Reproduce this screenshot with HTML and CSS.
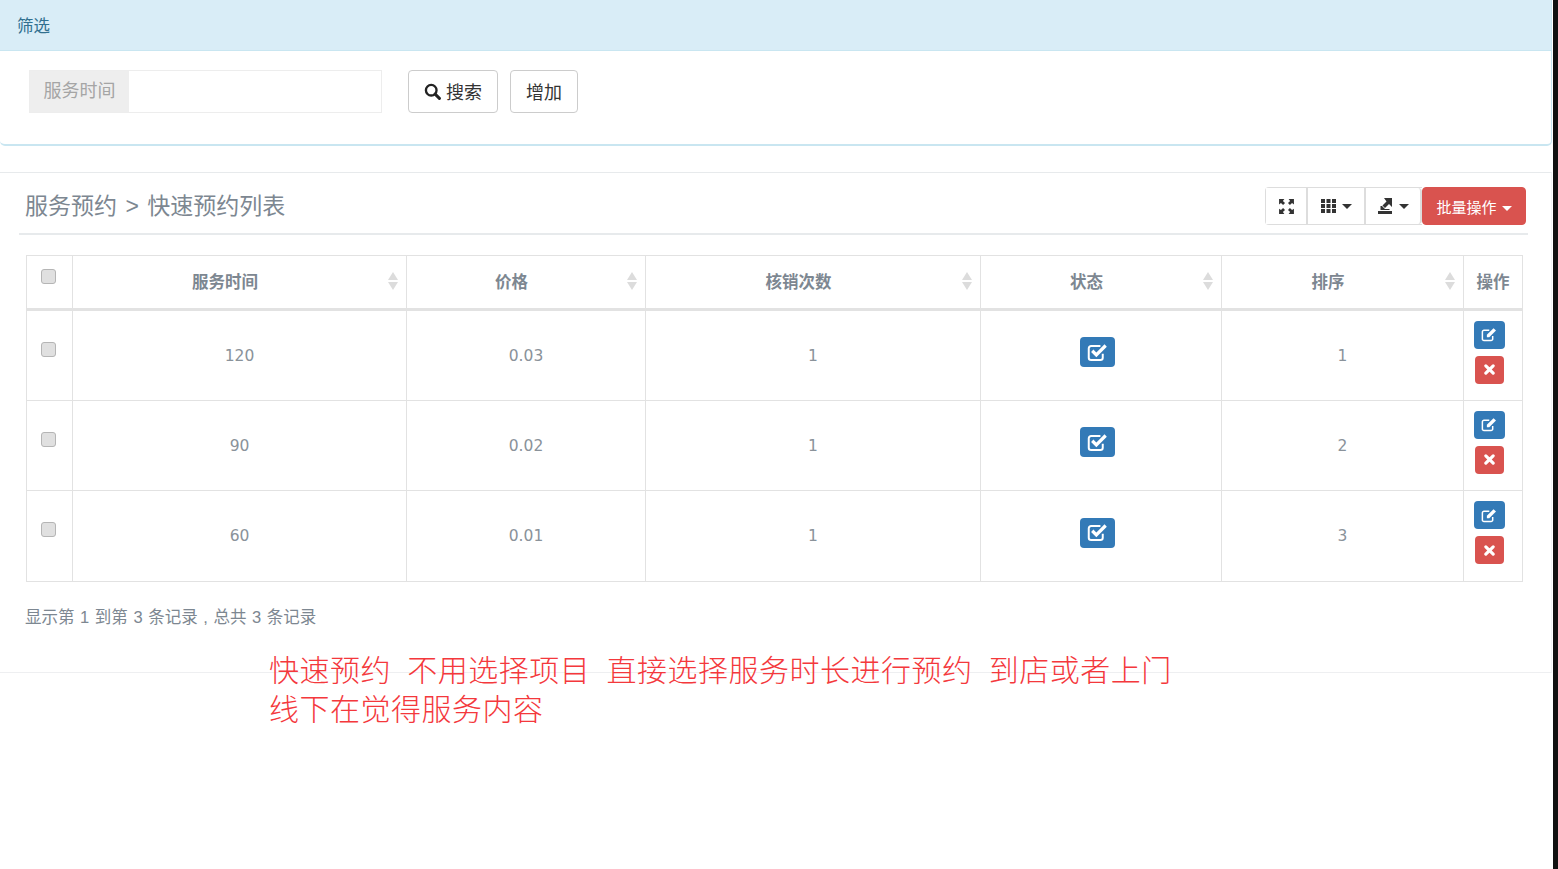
FILE: index.html
```html
<!DOCTYPE html>
<html lang="zh-CN">
<head>
  <meta charset="UTF-8" />
  <title>快速预约列表</title>
  <link rel="stylesheet" href="styles.css">
</head>
<body>
  <div class="page">
    <div class="filter-panel">
      <div class="filter-head">筛选</div>
      <div class="filter-body">
        <div class="input-group">
          <span class="input-label">服务时间</span>
          <input class="input-box" type="text" />
        </div>
        <button class="btn btn-search">
          <svg class="ico-search" viewBox="0 0 16 16"><circle cx="6.8" cy="6.8" r="5" fill="none" stroke="#222" stroke-width="2.2"/><path d="M10.5 10.5L14.5 14.5" stroke="#222" stroke-width="2.8" stroke-linecap="round"/></svg>
          搜索
        </button>
        <button class="btn btn-add">增加</button>
      </div>
    </div>

    <div class="list-box">
      <div class="list-head">
        <h3 class="list-title">服务预约 &gt; 快速预约列表</h3>
        <div class="toolbar">
          <div class="tool-group">
            <button class="tool tool-full">
              <svg width="17" height="17" viewBox="0 0 16 16" fill="#333"><path d="M1 1h5L4.6 2.8 6.6 4.8 4.8 6.6 2.8 4.6 1 6zM15 1v5L13.2 4.6 11.2 6.6 9.4 4.8 11.4 2.8 10 1zM1 15v-5l1.8 1.4 2-2 1.8 1.8-2 2L6 15zM15 15h-5l1.4-1.8-2-2 1.8-1.8 2 2L15 10z"/></svg>
            </button>
            <button class="tool tool-cols">
              <svg width="15" height="14" viewBox="0 0 15 14" fill="#333"><path d="M0 0h4v4H0zM5.500 0h4v4h-4zM11 0h4v4h-4zM0 5h4v4H0zM5.500 5h4v4h-4zM11 5h4v4h-4zM0 10h4v4H0zM5.500 10h4v4h-4zM11 10h4v4h-4z"/></svg>
              <span class="caret"></span>
            </button>
            <button class="tool tool-export">
              <svg width="15" height="16" viewBox="0 0 15 16" fill="#333"><path d="M0 13h14v3H0zM6 0h8v9l-3-3-4 4-2.500-2.500 4-4zM2.500 12V8H4l3 3h4.500v1z"/></svg>
              <span class="caret"></span>
            </button>
          </div>
          <button class="btn-batch">批量操作 <span class="caret caret-white"></span></button>
        </div>
      </div>

      <table class="data-table">
        <colgroup>
          <col class="col-check"><col class="col-time"><col class="col-price"><col class="col-count"><col class="col-state"><col class="col-sort"><col class="col-op">
        </colgroup>
        <thead>
          <tr>
            <th class="cell-check"><input class="check" type="checkbox" /></th>
            <th><div class="th-inner"><span class="th-label">服务时间</span><svg class="sort" viewBox="0 0 10 18"><path d="M5 0l5 8H0zM5 18L0 10h10z"/></svg></div></th>
            <th><div class="th-inner"><span class="th-label">价格</span><svg class="sort" viewBox="0 0 10 18"><path d="M5 0l5 8H0zM5 18L0 10h10z"/></svg></div></th>
            <th><div class="th-inner"><span class="th-label">核销次数</span><svg class="sort" viewBox="0 0 10 18"><path d="M5 0l5 8H0zM5 18L0 10h10z"/></svg></div></th>
            <th><div class="th-inner"><span class="th-label">状态</span><svg class="sort" viewBox="0 0 10 18"><path d="M5 0l5 8H0zM5 18L0 10h10z"/></svg></div></th>
            <th><div class="th-inner"><span class="th-label">排序</span><svg class="sort" viewBox="0 0 10 18"><path d="M5 0l5 8H0zM5 18L0 10h10z"/></svg></div></th>
            <th class="th-op">操作</th>
          </tr>
        </thead>
        <tbody id="rows">
          <tr>
            <td class="cell-check"><input class="check" type="checkbox" /></td>
            <td>120</td><td>0.03</td><td>1</td>
            <td class="cell-state"><button class="state-btn"><svg viewBox="0 0 18 16"><path d="M13.500 9v3.500a2 2 0 0 1-2 2h-8a2 2 0 0 1-2-2v-8a2 2 0 0 1 2-2h8" fill="none" stroke="#fff" stroke-width="1.700"/><path d="M4.500 6.500L8 10l8-8" fill="none" stroke="#fff" stroke-width="2.800"/></svg></button></td>
            <td>1</td>
            <td class="cell-op">
              <button class="op-btn op-edit"><svg viewBox="0 0 16 14"><path d="M11 8.500v2.700a1.500 1.500 0 0 1-1.500 1.500H2.800a1.500 1.500 0 0 1-1.500-1.500V4.500A1.500 1.500 0 0 1 2.800 3h5" fill="none" stroke="#fff" stroke-width="1.400"/><path d="M5.500 9.500V7.200L11.800 1l2.300 2.300-6.300 6.200z" fill="#fff"/></svg></button>
              <button class="op-btn op-del"><svg viewBox="0 0 12 12"><path d="M2 2l8 8M10 2l-8 8" stroke="#fff" stroke-width="3.400" stroke-linecap="round"/></svg></button>
            </td>
          </tr>
          <tr>
            <td class="cell-check"><input class="check" type="checkbox" /></td>
            <td>90</td><td>0.02</td><td>1</td>
            <td class="cell-state"><button class="state-btn"><svg viewBox="0 0 18 16"><path d="M13.500 9v3.500a2 2 0 0 1-2 2h-8a2 2 0 0 1-2-2v-8a2 2 0 0 1 2-2h8" fill="none" stroke="#fff" stroke-width="1.700"/><path d="M4.500 6.500L8 10l8-8" fill="none" stroke="#fff" stroke-width="2.800"/></svg></button></td>
            <td>2</td>
            <td class="cell-op">
              <button class="op-btn op-edit"><svg viewBox="0 0 16 14"><path d="M11 8.500v2.700a1.500 1.500 0 0 1-1.500 1.500H2.800a1.500 1.500 0 0 1-1.500-1.500V4.500A1.500 1.500 0 0 1 2.800 3h5" fill="none" stroke="#fff" stroke-width="1.400"/><path d="M5.500 9.500V7.200L11.800 1l2.300 2.300-6.300 6.200z" fill="#fff"/></svg></button>
              <button class="op-btn op-del"><svg viewBox="0 0 12 12"><path d="M2 2l8 8M10 2l-8 8" stroke="#fff" stroke-width="3.400" stroke-linecap="round"/></svg></button>
            </td>
          </tr>
          <tr>
            <td class="cell-check"><input class="check" type="checkbox" /></td>
            <td>60</td><td>0.01</td><td>1</td>
            <td class="cell-state"><button class="state-btn"><svg viewBox="0 0 18 16"><path d="M13.500 9v3.500a2 2 0 0 1-2 2h-8a2 2 0 0 1-2-2v-8a2 2 0 0 1 2-2h8" fill="none" stroke="#fff" stroke-width="1.700"/><path d="M4.500 6.500L8 10l8-8" fill="none" stroke="#fff" stroke-width="2.800"/></svg></button></td>
            <td>3</td>
            <td class="cell-op">
              <button class="op-btn op-edit"><svg viewBox="0 0 16 14"><path d="M11 8.500v2.700a1.500 1.500 0 0 1-1.500 1.500H2.800a1.500 1.500 0 0 1-1.500-1.500V4.500A1.500 1.500 0 0 1 2.800 3h5" fill="none" stroke="#fff" stroke-width="1.400"/><path d="M5.500 9.500V7.200L11.800 1l2.300 2.300-6.300 6.200z" fill="#fff"/></svg></button>
              <button class="op-btn op-del"><svg viewBox="0 0 12 12"><path d="M2 2l8 8M10 2l-8 8" stroke="#fff" stroke-width="3.400" stroke-linecap="round"/></svg></button>
            </td>
          </tr>
        </tbody>
      </table>

      <div class="list-info">显示第 1 到第 3 条记录 , 总共 3 条记录</div>
    </div>

    <div class="note">快速预约&nbsp;&nbsp;不用选择项目&nbsp;&nbsp;直接选择服务时长进行预约&nbsp;&nbsp;到店或者上门<br>线下在觉得服务内容</div>
  </div>
</body>
</html>
```

FILE: styles.css
```css
html, body {
  margin: 0;
  padding: 0;
  height: 100%;
  overflow: hidden;
  background: #111;
}
body {
  font-family: "Liberation Sans", "Noto Sans CJK SC", sans-serif;
  color: #676a6c;
}
.page {
  position: relative;
  width: 1553px;
  height: 869px;
  background: #fff;
}

/* filter panel */
.filter-panel {
  width: 1552px;
  height: 146px;
  box-sizing: border-box;
  border-bottom: 2px solid #c9e6f1;
  border-right: 1px solid #c9e6f1;
  border-radius: 0 0 5px 5px;
}
.filter-head {
  height: 51px;
  box-sizing: border-box;
  padding: 15px 0 0 17px;
  font-size: 16.500px;
  line-height: 22px;
  background: #d9edf7;
  border-bottom: 1px solid #c9e6f1;
  color: #31708f;
}
.filter-body {
  display: flex;
  align-items: flex-start;
  padding: 19px 0 0 29px;
}
.input-group {
  display: flex;
  width: 353px;
  height: 43px;
  box-sizing: border-box;
  border: 1px solid #ededed;
}
.input-label {
  width: 99px;
  background: #eee;
  color: #a5a5a5;
  font-size: 18px;
  line-height: 41px;
  text-align: center;
}
.input-box {
  flex: 1;
  min-width: 0;
  border: none;
  outline: none;
  padding: 0;
}
.btn {
  display: flex;
  align-items: center;
  justify-content: center;
  height: 43px;
  box-sizing: border-box;
  padding: 0 0 2px;
  background: #fff;
  border: 1px solid #ccc;
  border-radius: 4px;
  font-family: inherit;
  font-size: 18px;
  color: #333;
}
.btn-search {
  width: 90px;
  margin-left: 26px;
}
.btn-add {
  width: 68px;
  margin-left: 12px;
}
.ico-search {
  width: 17px;
  height: 17px;
  margin: 2px 5px 0 0;
}

/* list */
.list-box {
  margin-top: 26px;
  height: 501px;
  width: 1552px;
  box-sizing: border-box;
  border-top: 1px solid #e7eaec;
  border-bottom: 1px solid #eeeff1;
  border-right: 1px solid #f1f3f5;
  padding: 14px 0 0 19px;
}
.list-head {
  display: flex;
  justify-content: space-between;
  align-items: flex-start;
  width: 1509px;
  height: 46px;
  box-sizing: content-box;
  border-bottom: 2px solid #e7eaec;
}
.list-title {
  margin: 3px 0 0 6px;
  font-size: 23px;
  line-height: 32px;
  font-weight: normal;
  word-spacing: 2px;
  color: #7d8791;
}
.toolbar {
  display: flex;
  margin-right: 2px;
}
.tool-group {
  display: flex;
  height: 38px;
  box-sizing: border-box;
  border: 1px solid #ddd;
  border-radius: 4px 0 0 4px;
  border-right: none;
}
.tool {
  display: flex;
  align-items: center;
  justify-content: center;
  gap: 6px;
  padding: 0;
  height: 36px;
  background: #fff;
  border: none;
  border-right: 2px solid #ddd;
}
.tool-full {
  width: 42px;
}
.tool-cols {
  width: 58px;
}
.tool-export {
  width: 56px;
  border-radius: 0 4px 4px 0;
}
.caret {
  display: inline-block;
  width: 0;
  height: 0;
  border-top: 5px solid #333;
  border-left: 5px solid transparent;
  border-right: 5px solid transparent;
}
.caret-white {
  border-top-color: #fff;
  margin-left: 1px;
  vertical-align: 2px;
}
.btn-batch {
  width: 104px;
  height: 38px;
  padding: 0;
  background: #d9534f;
  border: 1px solid #d9534f;
  border-radius: 4px;
  color: #fff;
  font-family: inherit;
  font-size: 15px;
}

/* table */
.data-table {
  margin: 20px 0 0 7px;
  width: 1496px;
  table-layout: fixed;
  border-collapse: collapse;
  font-size: 16.500px;
}
.col-check { width: 46px; }
.col-time { width: 334px; }
.col-price { width: 239px; }
.col-count { width: 335px; }
.col-state { width: 241px; }
.col-sort { width: 242px; }
.col-op { width: 59px; }
.data-table th, .data-table td {
  border: 1px solid #e2e2e2;
  padding: 0;
  text-align: center;
}
.data-table thead tr {
  height: 54px;
}
.data-table thead th {
  border-bottom: 3px solid #e2e2e2;
  padding-bottom: 2px;
  color: #7d8791;
  font-size: 16.500px;
}
.th-inner {
  display: flex;
  align-items: center;
  padding: 0 8px 0 7px;
}
.th-label {
  flex: 1;
  padding-right: 18px;
}
.sort {
  width: 10px;
  height: 18px;
  fill: #dcdcdc;
}
.th-op {
  font-weight: bold;
}
.data-table tbody tr {
  height: 90.500px;
}
.data-table tbody td {
  padding-top: 1px;
  font-family: "DejaVu Sans", "Noto Sans CJK SC", sans-serif;
  font-size: 15.500px;
  color: #8a929a;
}
.data-table .cell-check {
  vertical-align: top;
}
.data-table tbody .cell-state {
  padding: 0 8px 0 0;
}
.data-table tbody .cell-op {
  padding: 0 7px 6px 0;
}
.data-table tbody .cell-check {
  padding: 0;
}
.check {
  appearance: none;
  display: block;
  width: 15px;
  height: 15px;
  margin: 31px 0 0 14px;
  background: #e0e0e0;
  border: 1px solid #b5b5b5;
  border-radius: 3px;
}
thead .check {
  margin-top: 13px;
}
.state-btn {
  display: block;
  width: 35px;
  height: 30px;
  margin: 0 auto 6px;
  padding: 0;
  background: #337ab7;
  border: none;
  border-radius: 4px;
}
.state-btn svg {
  display: block;
  width: 21px;
  height: 19px;
  margin: 0 auto;
}
.op-btn {
  display: block;
  height: 28px;
  margin: 0 auto;
  padding: 0;
  border: none;
  border-radius: 4px;
}
.op-btn svg {
  display: block;
  margin: 0 auto;
}
.op-edit {
  width: 31px;
  background: #337ab7;
}
.op-edit svg {
  width: 17px;
  height: 15px;
}
.op-del {
  width: 29px;
  margin-top: 7px;
  background: #d9534f;
}
.op-del svg {
  width: 11px;
  height: 11px;
}
.list-info {
  margin: 23px 0 0 6px;
  font-size: 16.500px;
  line-height: 24px;
  word-spacing: 1px;
  color: #7d8791;
}

/* red note written over the page */
.note {
  position: absolute;
  left: 269px;
  top: 649px;
  font-family: "Noto Sans CJK SC", sans-serif;
  font-weight: 300;
  font-size: 30px;
  letter-spacing: 0.5px;
  word-spacing: 1px;
  line-height: 39px;
  color: #f4383c;
  white-space: nowrap;
}
```
